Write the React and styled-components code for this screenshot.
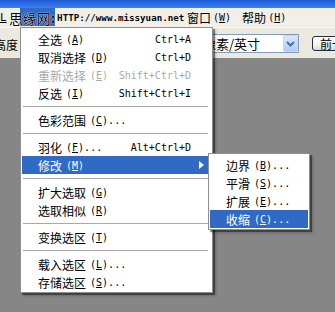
import React from 'react';
import styled, { createGlobalStyle } from 'styled-components';

const Global = createGlobalStyle`
  html, body { margin: 0; padding: 0; }
  body {
    width: 335px; height: 312px; overflow: hidden; background: #868686;
    font-family: "Noto Sans CJK SC", "Liberation Sans", sans-serif;
  }
`;

const CJK = `"Noto Sans CJK SC", sans-serif`;
const MONO = `"DejaVu Sans Mono", "Liberation Mono", monospace`;

const Screen = styled.div`
  position: relative;
  width: 335px;
  height: 312px;
  display: flex;
  flex-direction: column;
  overflow: hidden;
`;

const TitleStrip = styled.div`
  height: 8px;
  flex-shrink: 0;
  background: linear-gradient(#1d5bd6, #3a81ee);
`;

const MenuBar = styled.div`
  position: relative;
  height: 19px;
  flex-shrink: 0;
  background: #f1efe7;
  display: flex;
  align-items: center;
  font-family: ${CJK};
  font-size: 12px;
  color: #000;
  white-space: nowrap;
`;

const BarLetter = styled.span`
  font-family: ${MONO};
  font-size: 11px;
  text-decoration: underline;
  width: 7px;
`;

const OpenMenuTitle = styled.div`
  margin-left: 13px;
  width: 35px;
  height: 18px;
  align-self: flex-start;
  background: #316ac5;
`;

const BarItem = styled.span`
  margin-left: ${p => p.$gap}px;
  display: flex;
  align-items: center;
`;

const BarKey = styled.span`
  font-family: ${MONO};
  font-size: 10px;
  margin-left: 2px;
  u { text-decoration: underline; }
`;

const Watermark = styled.div`
  position: absolute;
  left: 9px;
  top: 0;
  height: 19px;
  display: flex;
  align-items: center;
  color: #000;
  text-shadow: 0 0 1px #fff, 0 0 1px #fff;
  z-index: 2;
`;

const WmCJK = styled.span`
  font-family: ${CJK};
  font-size: 14px;
  letter-spacing: -0.3px;
`;

const WmColon = styled.span`
  font-family: ${CJK};
  font-size: 13px;
  font-weight: bold;
  width: 5px;
  margin-left: 1px;
`;

const WmUrl = styled.span`
  font-family: ${MONO};
  font-size: 9.2px;
  font-weight: bold;
  margin-left: 1px;
`;

const OptionsBar = styled.div`
  height: 31px;
  flex-shrink: 0;
  background: #ebe9dd;
  display: flex;
  align-items: center;
  white-space: nowrap;
  border-top: 1px solid #fbfaf5;
  box-sizing: border-box;
`;

const OptLabel = styled.span`
  margin-left: -6px;
  width: 24px;
  font-family: ${CJK};
  font-size: 12px;
  color: #000;
  margin-top: 2px;
`;

const Select = styled.div`
  margin-left: 182px;
  width: 99px;
  height: 19px;
  flex-shrink: 0;
  box-sizing: border-box;
  border: 1px solid #7f9db9;
  background: #fff;
  display: flex;
  align-items: center;
  padding-left: 2px;
  font-family: ${CJK};
  font-size: 13px;
  color: #000;
  margin-top: 1px;
`;

const DropButton = styled.div`
  margin-left: auto;
  width: 15px;
  height: 17px;
  box-sizing: border-box;
  border: 1px solid #c3d3fd;
  border-radius: 2px;
  background: linear-gradient(#dbe5fc, #b7c9f5);
  display: flex;
  align-items: center;
  justify-content: center;
`;

const PushButton = styled.div`
  margin-left: 13px;
  width: 40px;
  height: 15px;
  flex-shrink: 0;
  box-sizing: border-box;
  border: 1px solid #1e2f45;
  border-radius: 3px;
  background: linear-gradient(#ffffff, #f1efe6 70%, #d9d6c8);
  display: flex;
  align-items: center;
  padding-left: 7px;
  font-family: ${CJK};
  font-size: 12px;
  color: #000;
  margin-top: 1px;
`;

const Workspace = styled.div`
  flex: 1;
  background: #868686;
`;

const Menu = styled.div`
  position: absolute;
  left: 20px;
  top: 27px;
  width: ${p => p.$w}px;
  box-sizing: border-box;
  background: #fff;
  border: 1px solid #8e8e8e;
  padding: 2px 1px 1px;
  box-shadow: 2px 2px 0 rgba(0, 0, 0, 0.38), 3px 3px 2px rgba(0, 0, 0, 0.22);
  z-index: 10;
`;

const SubMenu = styled(Menu)`
  left: 186px;
  top: -3px;
  z-index: 11;
`;

const Item = styled.div`
  position: relative;
  height: 18px;
  display: flex;
  align-items: center;
  padding: 0 7px 0 ${p => p.$indent}px;
  background: ${p => (p.$active ? '#316ac5' : 'transparent')};
  color: ${p => (p.$active ? '#fff' : p.$disabled ? '#a9a9a9' : '#000')};
  font-family: ${CJK};
  font-size: 12px;
  white-space: nowrap;
`;

const Key = styled.span`
  font-family: ${MONO};
  font-size: 10px;
  margin-left: 4px;
  u { text-decoration: underline; text-underline-offset: 1px; }
`;

const Shortcut = styled.span`
  margin-left: auto;
  margin-right: 13px;
  font-family: ${MONO};
  font-size: 10px;
`;

const Arrow = styled.svg`
  margin-left: auto;
  display: block;
`;

const Separator = styled.div`
  height: 9px;
  display: flex;
  align-items: center;
  &::after {
    content: '';
    flex: 1;
    height: 1px;
    margin: 0 3px 0 1px;
    background: #a8a8a8;
  }
`;

const mainItems = [
  { t: '全选', k: 'A', s: 'Ctrl+A' },
  { t: '取消选择', k: 'D', s: 'Ctrl+D' },
  { t: '重新选择', k: 'E', s: 'Shift+Ctrl+D', disabled: true },
  { t: '反选', k: 'I', s: 'Shift+Ctrl+I' },
  'sep',
  { t: '色彩范围', k: 'C', dots: true },
  'sep',
  { t: '羽化', k: 'F', dots: true, s: 'Alt+Ctrl+D' },
  { t: '修改', k: 'M', sub: true },
  'sep',
  { t: '扩大选取', k: 'G' },
  { t: '选取相似', k: 'R' },
  'sep',
  { t: '变换选区', k: 'T' },
  'sep',
  { t: '载入选区', k: 'L', dots: true },
  { t: '存储选区', k: 'S', dots: true },
];

const subItems = [
  { t: '边界', k: 'B' },
  { t: '平滑', k: 'S' },
  { t: '扩展', k: 'E' },
  { t: '收缩', k: 'C', active: true },
];

function Label({ t, k, dots }) {
  return (
    <>
      <span>{t}</span>
      <Key>(<u>{k}</u>){dots ? '...' : ''}</Key>
    </>
  );
}

export default function App() {
  return (
    <>
      <Global />
      <Screen>
        <TitleStrip />
        <MenuBar>
          <BarLetter>L</BarLetter>
          <OpenMenuTitle />
          <BarItem $gap={132}>
            窗口<BarKey>(<u>W</u>)</BarKey>
          </BarItem>
          <BarItem $gap={11}>
            帮助<BarKey>(<u>H</u>)</BarKey>
          </BarItem>
          <Watermark>
            <WmCJK>思缘网</WmCJK>
            <WmColon>:</WmColon>
            <WmUrl>HTTP://www.missyuan.net</WmUrl>
          </Watermark>
        </MenuBar>
        <OptionsBar>
          <OptLabel>高度</OptLabel>
          <Select>
            像素/英寸
            <DropButton>
              <svg width="9" height="6" viewBox="0 0 9 6">
                <polyline points="1,1 4.5,4.5 8,1" fill="none" stroke="#4d6aa8" strokeWidth="2" />
              </svg>
            </DropButton>
          </Select>
          <PushButton>前一</PushButton>
        </OptionsBar>
        <Workspace />
        <Menu $w={193}>
          {mainItems.map((it, i) =>
            it === 'sep' ? (
              <Separator key={i} />
            ) : (
              <Item key={i} $indent={16} $active={it.sub} $disabled={it.disabled}>
                <Label {...it} />
                {it.s && <Shortcut>{it.s}</Shortcut>}
                {it.sub && (
                  <>
                    <Arrow width="5" height="8" viewBox="0 0 5 8">
                      <polygon points="0,0 5,4 0,8" fill="#fff" />
                    </Arrow>
                    <SubMenu $w={102}>
                      {subItems.map((s, j) => (
                        <Item key={j} $indent={16} $active={s.active}>
                          <Label {...s} dots />
                        </Item>
                      ))}
                    </SubMenu>
                  </>
                )}
              </Item>
            )
          )}
        </Menu>
      </Screen>
    </>
  );
}
